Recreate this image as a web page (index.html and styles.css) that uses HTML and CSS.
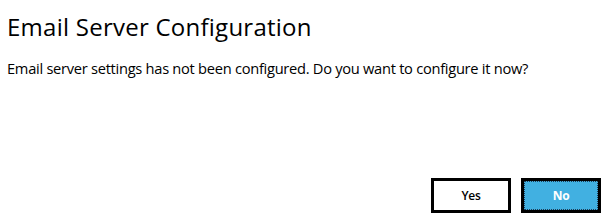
FILE: index.html
```html
<!DOCTYPE html>
<html lang="en">
<head>
<meta charset="utf-8">
<title>Email Server Configuration</title>
<link rel="stylesheet" href="styles.css">
</head>
<body>
<div class="dialog">
  <h1 class="title">Email Server Configuration</h1>
  <p class="message">Email server settings has not been configured. Do you want to configure it now?</p>
  <div class="actions">
    <button class="btn btn-yes" type="button">Yes</button>
    <button class="btn btn-no" type="button">No</button>
  </div>
</div>
</body>
</html>
```

FILE: styles.css
```css
html, body {
  margin: 0;
  padding: 0;
  background: #ffffff;
}

.dialog {
  box-sizing: border-box;
  height: 221px;
  padding: 11px 9px 8px 7px;
  display: flex;
  flex-direction: column;
  font-family: "Open Sans", "Noto Sans", sans-serif;
  color: #000000;
}

.title {
  margin: 0;
  font-size: 24px;
  line-height: 32px;
  font-weight: 400;
  letter-spacing: 0.25px;
}

.message {
  margin: 15px 0 0 0;
  font-size: 14.67px;
  line-height: 20px;
  letter-spacing: -0.28px;
}

.actions {
  margin-top: auto;
  display: flex;
  justify-content: flex-end;
  gap: 10px;
}

.btn {
  box-sizing: border-box;
  width: 80px;
  height: 35px;
  border: 3px solid #000000;
  padding: 0;
  font-family: "Open Sans", "Noto Sans", sans-serif;
  font-size: 12px;
  font-weight: 600;
  letter-spacing: -0.3px;
}

.btn-yes {
  background: #ffffff;
  color: #000000;
}

.btn-no {
  background: #41b0e1;
  color: #ffffff;
  font-weight: 700;
  outline: 1px dotted #1d3b55;
  outline-offset: -4px;
}
```
